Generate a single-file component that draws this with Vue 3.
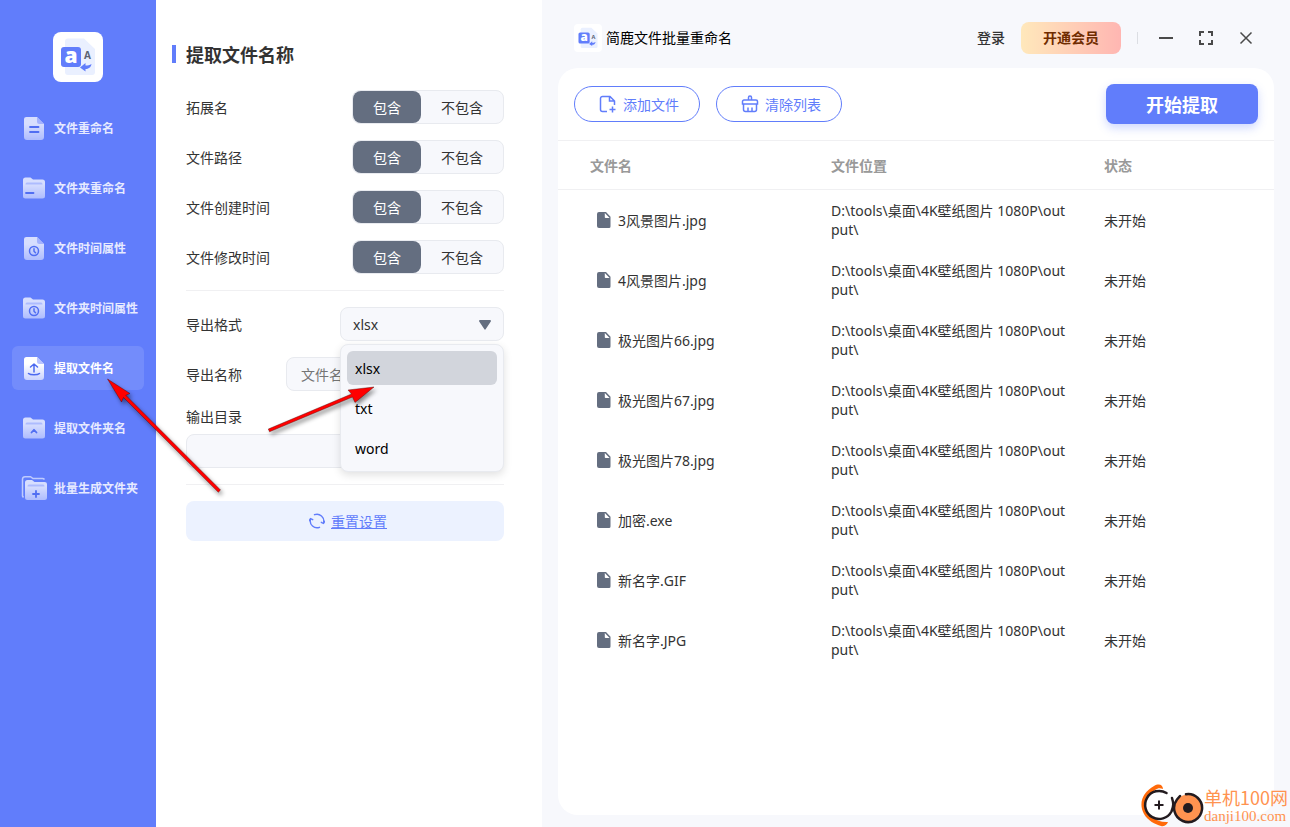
<script setup>
import { ref } from 'vue'

const nav = [
  { label: '文件重命名', icon: 'file', glyph: 'lines' },
  { label: '文件夹重命名', icon: 'folder', glyph: 'dash' },
  { label: '文件时间属性', icon: 'file', glyph: 'clock' },
  { label: '文件夹时间属性', icon: 'folder', glyph: 'clock' },
  { label: '提取文件名', icon: 'file', glyph: 'upload', active: true },
  { label: '提取文件夹名', icon: 'folder', glyph: 'chevron' },
  { label: '批量生成文件夹', icon: 'folders', glyph: 'plus' },
]

const options = ref([
  { id: 'ext', label: '拓展名', value: 'yes' },
  { id: 'path', label: '文件路径', value: 'yes' },
  { id: 'ctime', label: '文件创建时间', value: 'yes' },
  { id: 'mtime', label: '文件修改时间', value: 'yes' },
])

const formats = ['xlsx', 'txt', 'word']
const format = ref('xlsx')
const exportName = ref('')
const outputDir = ref('')

const location = 'D:\\tools\\桌面\\4K壁纸图片 1080P\\output\\'
const files = [
  '3风景图片.jpg',
  '4风景图片.jpg',
  '极光图片66.jpg',
  '极光图片67.jpg',
  '极光图片78.jpg',
  '加密.exe',
  '新名字.GIF',
  '新名字.JPG',
]
</script>

<template>
  <div class="app">
    <svg class="defs" aria-hidden="true">
      <defs>
        <linearGradient id="fade" x1="0" y1="0" x2="0" y2="1">
          <stop offset="0.3" stop-color="#fff" />
          <stop offset="1" stop-color="#c9d2ff" />
        </linearGradient>
        <symbol id="logo" viewBox="0 0 50 50">
          <path d="M15 6.500h16L42 17v23a3 3 0 0 1-3 3H15a3 3 0 0 1-3-3V9.500a3 3 0 0 1 3-3z" fill="#eaf0ff" />
          <rect x="8" y="15" width="20" height="20" rx="3" fill="#617dfb" />
          <text x="18" y="31" text-anchor="middle" font-family="'Open Sans', sans-serif" font-size="21" font-weight="800" fill="#fff">a</text>
          <text x="34.500" y="27" text-anchor="middle" font-family="'Open Sans', sans-serif" font-size="10" font-weight="700" fill="#5b6273">A</text>
          <path d="M27 35.500l5.500-4.500v2.500c2.500 0 4-.5 6-1.500-.6 3.600-3 5-6 5v2.500z" fill="#617dfb" />
        </symbol>
      </defs>
    </svg>

    <aside class="sidebar">
      <svg class="brand" viewBox="0 0 50 50" aria-hidden="true"><use href="#logo" /></svg>
      <nav class="nav">
        <a v-for="item in nav" :key="item.label" href="#" class="nav-item" :class="{ active: item.active }">
          <svg class="nav-icon" viewBox="0 0 26 26" aria-hidden="true">
            <g v-if="item.icon === 'file'">
              <path d="M5.500 2h10.500L23 9v13a3 3 0 0 1-3 3H6a3 3 0 0 1-3-3V4.500A2.500 2.500 0 0 1 5.500 2z" fill="url(#fade)" />
              <path d="M16 2L23 9h-4.500a2.500 2.500 0 0 1-2.500-2.500z" fill="#b9c4ff" />
            </g>
            <g v-else-if="item.icon === 'folder'">
              <path d="M2 5a2.500 2.500 0 0 1 2.500-2.500H9.500L12 4.500h9.500A2.500 2.500 0 0 1 24 7v14a2.500 2.500 0 0 1-2.500 2.500h-17A2.500 2.500 0 0 1 2 21z" fill="url(#fade)" />
              <path d="M4.500 9.500c0-1.500.8-2 2-2h13c1.200 0 2 .5 2 2z" fill="#b9c4ff" opacity=".8" />
            </g>
            <g v-else>
              <path d="M2.500 22.500L1.500 21V4A2.500 2.500 0 0 1 4 1.700h5.500l2.500 1.800h9.500A2.500 2.500 0 0 1 23.500 4.500" fill="none" stroke="#dfe5ff" stroke-width="1.500" />
              <path d="M4 7.500A2.500 2.500 0 0 1 6.500 5h4.500l2.500 2h10A2.500 2.500 0 0 1 26 9.500v13a2.500 2.500 0 0 1-2.500 2.500h-17A2.500 2.500 0 0 1 4 22.500z" fill="url(#fade)" />
              <path d="M6.500 11.500c0-1.500.8-2 2-2h13c1.200 0 2 .5 2 2z" fill="#b9c4ff" opacity=".8" />
            </g>
            <g fill="none" stroke="#4c69f0" stroke-width="1.800" stroke-linecap="round" stroke-linejoin="round">
              <path v-if="item.glyph === 'lines'" d="M9 12h8.500M9 17h8.500" />
              <path v-else-if="item.glyph === 'dash'" d="M5 18h7.500" />
              <template v-else-if="item.glyph === 'clock'">
                <circle cx="13" cy="16" r="4.500" stroke-width="1.500" />
                <path d="M13 13.800v2.500l1.500 1.500" stroke-width="1.500" />
              </template>
              <path v-else-if="item.glyph === 'upload'" d="M13 17V9.500M9.500 12L13 9l3.500 3M7.500 18.500c2 1.800 9 1.800 11 0" stroke-width="1.500" />
              <path v-else-if="item.glyph === 'chevron'" d="M10.500 17.500L13 14.800l2.500 2.700" />
              <path v-else d="M12 19h6M15 16v6" />
            </g>
          </svg>
          <span>{{ item.label }}</span>
        </a>
      </nav>
    </aside>

    <section class="settings">
      <h1 class="title">提取文件名称</h1>
      <div class="form">
        <div v-for="o in options" :key="o.id" class="row" role="radiogroup" :aria-label="o.label">
          <span>{{ o.label }}</span>
          <div class="segment">
            <label class="choice"><input v-model="o.value" type="radio" :name="o.id" value="yes" /><span>包含</span></label>
            <label class="choice wide"><input v-model="o.value" type="radio" :name="o.id" value="no" /><span>不包含</span></label>
          </div>
        </div>
        <hr class="rule" />
        <div class="row">
          <label for="format">导出格式</label>
          <div class="picker">
            <select id="format" v-model="format" class="field">
              <option v-for="f in formats" :key="f">{{ f }}</option>
            </select>
            <svg class="caret" viewBox="0 0 14 12" aria-hidden="true"><path d="M2 1h10a1 1 0 0 1 .8 1.600l-5 7.500a1 1 0 0 1-1.600 0l-5-7.500A1 1 0 0 1 2 1z" fill="#646e80" /></svg>
            <ul class="menu">
              <li v-for="f in formats" :key="f">
                <button type="button" class="menu-item" :class="{ selected: f === format }" @click="format = f">{{ f }}</button>
              </li>
            </ul>
          </div>
        </div>
        <div class="row">
          <label for="name">导出名称</label>
          <input id="name" v-model="exportName" class="field name" type="text" placeholder="文件名称" />
        </div>
        <div class="stack">
          <label for="dir">输出目录</label>
          <input id="dir" v-model="outputDir" class="field" type="text" />
        </div>
        <hr class="rule" />
        <button type="button" class="reset">
          <svg viewBox="0 0 16 16" aria-hidden="true">
            <g fill="none" stroke="#617dfb" stroke-width="1.400" stroke-linecap="round" stroke-linejoin="round">
              <path d="M5.500 1.700A6.800 6.800 0 0 1 14.500 9.800M10.500 14.300A6.800 6.800 0 0 1 1.500 6.200" />
              <path d="M12.300 9.300l2.200 1.200 1.200-2.200M3.700 6.700L1.500 5.500.3 7.700" />
            </g>
          </svg>
          <span>重置设置</span>
        </button>
      </div>
    </section>

    <main class="main">
      <header class="topbar">
        <svg class="mini" viewBox="0 0 50 50" aria-hidden="true"><use href="#logo" /></svg>
        <span class="app-name">简鹿文件批量重命名</span>
        <a href="#" class="login">登录</a>
        <button type="button" class="vip">开通会员</button>
        <span class="sep"></span>
        <button type="button" class="win" aria-label="最小化"><svg viewBox="0 0 16 16"><path d="M1 8h14" /></svg></button>
        <button type="button" class="win" aria-label="最大化"><svg viewBox="0 0 16 16"><path d="M2 6V2h4M10 2h4v4M14 10v4h-4M6 14H2v-4" /></svg></button>
        <button type="button" class="win thin" aria-label="关闭"><svg viewBox="0 0 16 16"><path d="M2.500 2.500l11 11M13.500 2.500l-11 11" /></svg></button>
      </header>

      <div class="card">
        <div class="toolbar">
          <button type="button" class="pill">
            <svg viewBox="0 0 18 18" aria-hidden="true"><path d="M8 16.500H3.500a2 2 0 0 1-2-2v-11a2 2 0 0 1 2-2h7.500L15.500 6v4M10.500 1.500V6h5M13.500 11.500v6M10.500 14.500h6" /></svg>
            <span>添加文件</span>
          </button>
          <button type="button" class="pill">
            <svg viewBox="0 0 18 18" aria-hidden="true"><path d="M7.500 4.500V2.500a1.500 1.500 0 0 1 3 0v2M1.500 9V6.500a1.500 1.500 0 0 1 1.500-1.500h12a1.500 1.500 0 0 1 1.500 1.500V9zM2.500 9v5.500a2 2 0 0 0 2 2h9a2 2 0 0 0 2-2V9M7 12.500v4M11 12.500v4" /></svg>
            <span>清除列表</span>
          </button>
          <button type="button" class="start">开始提取</button>
        </div>
        <table class="files">
          <colgroup><col class="c-name" /><col class="c-loc" /><col /></colgroup>
          <thead>
            <tr><th>文件名</th><th>文件位置</th><th>状态</th></tr>
          </thead>
          <tbody>
            <tr v-for="f in files" :key="f">
              <td>
                <div class="file">
                  <svg viewBox="0 0 14 16" aria-hidden="true"><path fill-rule="evenodd" d="M2 0h7l4.500 4.800v9.700A1.500 1.500 0 0 1 12 16H2a2 2 0 0 1-2-2V2a2 2 0 0 1 2-2zM7.800 1v4.200a.8.800 0 0 0 .8.800h4z" fill="#646e80" /></svg>
                  <span>{{ f }}</span>
                </div>
              </td>
              <td class="loc">{{ location }}</td>
              <td>未开始</td>
            </tr>
          </tbody>
        </table>
      </div>
    </main>

    <svg class="arrows" viewBox="0 0 400 180" aria-hidden="true">
      <g fill="#f00" stroke="#400" stroke-width=".4">
        <path d="M7.500 8L30 22.500 25.800 24.300 120.500 119 118.300 121.200 23.500 26.500 21.500 31z" />
        <path d="M274 16L255 31.500 252.500 26 169.500 60.800 168.300 58 251.500 23 248 19z" />
      </g>
    </svg>

    <div class="mark">
      <svg viewBox="0 0 64 44" aria-hidden="true">
        <path d="M23 6c0-4-4-6-9-3C3 9-2 20 4 31c4 7 11 10 17 12 4 1 6-2 7-4C8 40 0 20 15 7c3-2 5-2 8-1z" fill="#ff6a0a" />
        <circle cx="19" cy="22" r="14" fill="#fff" />
        <path d="M26.500 10A14 14 0 1 0 31.500 28.500C34 22 33.500 20 32 15" fill="none" stroke="#231b1f" stroke-width="2.500" stroke-linecap="round" />
        <path d="M19 17.500v9M14.500 22h9" stroke="#231b1f" stroke-width="2" />
        <circle cx="48" cy="25" r="13.500" fill="#ff9350" />
        <path d="M46 11.200A14 14 0 1 1 37 16.500L40 13" fill="none" stroke="#231b1f" stroke-width="2.500" stroke-linecap="round" />
        <circle cx="48" cy="25" r="5" fill="#231b1f" />
      </svg>
      <div class="mark-text"><span>单机100网</span><small>danji100.com</small></div>
    </div>
  </div>
</template>

<style>
body {
  margin: 0;
}
</style>

<style scoped>
.app,
.app * {
  box-sizing: border-box;
}
.app {
  position: relative;
  display: grid;
  grid-template-columns: 156px 386px 1fr;
  min-height: 100vh;
  font: 14px/19px 'Noto Sans', 'Noto Sans CJK SC', sans-serif;
  color: #333;
  background: #fff;
}
button,
input,
select {
  font: inherit;
  color: inherit;
  margin: 0;
}
button {
  padding: 0;
  border: 0;
  cursor: pointer;
}
a {
  color: inherit;
  text-decoration: none;
}
.defs {
  position: absolute;
  width: 0;
  height: 0;
}

.sidebar {
  display: flex;
  flex-direction: column;
  align-items: center;
  gap: 24px;
  padding: 32px 12px;
  background: #617dfb;
}
.brand {
  width: 50px;
  height: 50px;
  border-radius: 8px;
  background: #fff;
}
.nav {
  display: flex;
  flex-direction: column;
  gap: 16px;
  width: 100%;
}
.nav-item {
  display: flex;
  align-items: center;
  gap: 7px;
  height: 44px;
  padding-left: 9px;
  border-radius: 6px;
  font-size: 12px;
  font-weight: 700;
  color: #e6eaff;
  white-space: nowrap;
}
.nav-icon {
  width: 26px;
  height: 26px;
  opacity: 0.75;
}
.nav-item span {
  padding-top: 1px;
}
.nav-item.active {
  color: #fff;
  background: #738cfb;
}
.nav-item.active .nav-icon {
  opacity: 1;
}

.settings {
  padding: 45px 38px 32px 16px;
}
.title {
  height: 18px;
  margin: 0 0 27px;
  padding-left: 10px;
  border-left: 4px solid #617dfb;
  font-size: 18px;
  line-height: 20px;
  font-weight: 700;
}
.form {
  display: flex;
  flex-direction: column;
  gap: 16px;
  padding-left: 14px;
}
.row {
  display: flex;
  align-items: center;
  justify-content: space-between;
  height: 34px;
}
.segment {
  display: flex;
  width: 152px;
  height: 34px;
  border: 1px solid #e8eaef;
  border-radius: 8px;
  background: #f7f8fc;
}
.choice {
  position: relative;
  display: flex;
  width: 68px;
  cursor: pointer;
}
.choice.wide {
  flex: 1;
}
.choice input {
  position: absolute;
  opacity: 0;
}
.choice span {
  flex: 1;
  display: grid;
  place-items: center;
  border-radius: 8px;
}
.choice input:checked + span {
  color: #fff;
  background: #646e80;
}
.rule {
  width: 100%;
  height: 1px;
  margin: 0;
  border: 0;
  background: #f0f0f2;
}
.field {
  width: 100%;
  height: 34px;
  padding: 0 12px;
  border: 1px solid #e8eaef;
  border-radius: 8px;
  background: #f7f8fc;
  appearance: none;
  outline: none;
}
.field.name {
  width: 218px;
  padding: 0 14px;
}
.field::placeholder {
  color: #757575;
}
.picker {
  position: relative;
  width: 164px;
}
.caret {
  position: absolute;
  right: 12px;
  top: 12px;
  width: 14px;
  height: 12px;
  pointer-events: none;
}
.menu {
  position: absolute;
  z-index: 2;
  top: 37px;
  left: 0;
  display: flex;
  flex-direction: column;
  gap: 6px;
  width: 100%;
  margin: 0;
  padding: 6px;
  list-style: none;
  border: 1px solid #e8eaef;
  border-radius: 8px;
  background: #f7f8fc;
  box-shadow: 0 3px 8px rgba(0, 0, 0, 0.12);
}
.menu-item {
  display: block;
  width: 100%;
  height: 34px;
  padding-left: 8px;
  border-radius: 6px;
  text-align: left;
  color: #000;
  background: none;
}
.menu-item.selected {
  background: #d2d5dc;
}
.stack {
  display: flex;
  flex-direction: column;
  gap: 8px;
}
.reset {
  display: flex;
  align-items: center;
  justify-content: center;
  gap: 6px;
  height: 40px;
  padding-left: 6px;
  border-radius: 8px;
  color: #617dfb;
  background: #ecf2ff;
}
.reset svg {
  width: 16px;
  height: 16px;
}
.reset span {
  text-decoration: underline;
}

.main {
  display: flex;
  flex-direction: column;
  gap: 14px;
  padding: 22px 16px 12px;
  background: #f7f8fc;
}
.topbar {
  display: flex;
  align-items: center;
  height: 32px;
  padding: 0 8px 0 16px;
}
.mini {
  width: 28px;
  height: 28px;
  border-radius: 4px;
  background: #fff;
}
.app-name {
  flex: 1;
  margin-left: 4px;
  padding-bottom: 2px;
  color: #000;
}
.login {
  margin-right: 16px;
  padding-bottom: 2px;
  font-weight: 500;
}
.vip {
  width: 100px;
  height: 32px;
  padding-bottom: 2px;
  border-radius: 8px;
  font-weight: 700;
  color: #702c00;
  background: linear-gradient(90deg, #ffe8bb, #ffb6b2);
}
.sep {
  width: 1px;
  height: 12px;
  margin: 0 8px 0 16px;
  background: #dcdee3;
}
.win {
  display: grid;
  place-items: center;
  width: 40px;
  height: 32px;
  background: none;
}
.win svg {
  width: 16px;
  height: 16px;
  fill: none;
  stroke: #4a4a4a;
  stroke-width: 2;
}
.win.thin svg {
  stroke-width: 1.5;
}
.card {
  flex: 1;
  border-radius: 20px;
  background: #fff;
}
.toolbar {
  display: flex;
  align-items: center;
  gap: 16px;
  height: 73px;
  padding: 0 16px;
  border-bottom: 1px solid #f0f0f2;
}
.pill {
  display: flex;
  align-items: center;
  justify-content: center;
  gap: 6px;
  width: 126px;
  height: 36px;
  padding-left: 4px;
  border: 1px solid #617dfb;
  border-radius: 18px;
  color: #617dfb;
  background: none;
}
.pill svg {
  width: 18px;
  height: 18px;
  fill: none;
  stroke: #617dfb;
  stroke-width: 1.5;
}
.start {
  width: 152px;
  height: 40px;
  margin-left: auto;
  padding-top: 2px;
  border-radius: 8px;
  font-size: 18px;
  font-weight: 700;
  color: #fff;
  background: #617dfb;
  box-shadow: 0 4px 10px rgba(97, 125, 251, 0.3);
}
.files {
  width: 100%;
  table-layout: fixed;
  border-collapse: separate;
  border-spacing: 0;
}
.c-name {
  width: 273px;
}
.c-loc {
  width: 273px;
}
.files th {
  height: 49px;
  padding: 0;
  border-bottom: 1px solid #f0f0f2;
  text-align: left;
  font-weight: 700;
  color: #999;
}
.files th:first-child {
  padding-left: 32px;
}
.files td {
  height: 60px;
  padding: 0;
}
.files td:first-child {
  padding-left: 39px;
}
.files .loc {
  padding-right: 32px;
  word-break: break-all;
}
.file {
  display: flex;
  align-items: center;
  gap: 7px;
}
.file svg {
  width: 14px;
  height: 16px;
}

.arrows {
  position: absolute;
  z-index: 3;
  left: 100px;
  top: 371px;
  width: 400px;
  height: 180px;
  pointer-events: none;
  filter: drop-shadow(2px 3px 2px rgba(0, 0, 0, 0.45));
}
.mark {
  position: absolute;
  right: 2px;
  bottom: 0;
  display: flex;
  align-items: center;
  color: #ff9350;
}
.mark svg {
  width: 64px;
  height: 44px;
}
.mark-text {
  display: flex;
  flex-direction: column;
  font-size: 18px;
  line-height: 22px;
  font-family: 'Noto Sans CJK SC', sans-serif;
}
.mark-text small {
  font-family: 'Liberation Serif', serif;
  font-size: 15px;
  line-height: 16px;
}
</style>
